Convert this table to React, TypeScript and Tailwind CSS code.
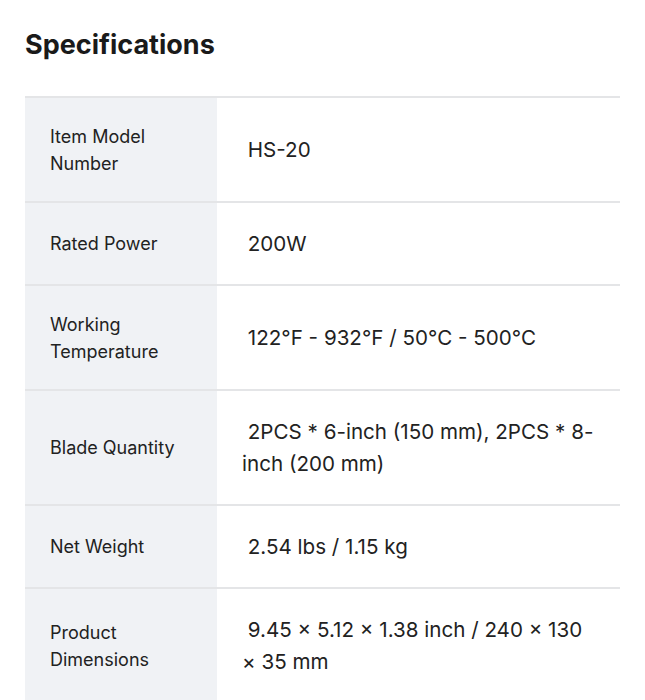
import React from 'react';

interface SpecRow {
    label: string[];
    value: string;
}

const specs: SpecRow[] = [
    { label: ['Item Model', 'Number'], value: '\u00a0HS-20' },
    { label: ['Rated Power'], value: '\u00a0200W' },
    { label: ['Working', 'Temperature'], value: '\u00a0122°F - 932°F / 50°C - 500°C' },
    { label: ['Blade Quantity'], value: '\u00a02PCS * 6-inch (150 mm), 2PCS * 8-inch (200 mm)' },
    { label: ['Net Weight'], value: '\u00a02.54 lbs / 1.15 kg' },
    { label: ['Product', 'Dimensions'], value: '\u00a09.45 × 5.12 × 1.38 inch / 240 × 130 × 35 mm' },
];

const App: React.FC = () => {
    return (
        <div className="min-h-screen bg-white font-['Inter',sans-serif] text-[#1c1c1e] px-[25px] pt-[28px]">
            <h2 className="text-[27px] font-bold leading-[34px] text-[#1a1a1a] mb-[34px]">Specifications</h2>

            {/* Spec table */}
            <div className="w-[595px] border-t-2 border-[#e4e5e7]">
                {specs.map((row) => (
                    <div key={row.value} className="flex border-b-2 border-[#e4e5e7]">
                        <div className="w-[192px] shrink-0 bg-[#f0f2f5] px-[25px] py-[24.5px] flex items-center">
                            <span className="text-[18px] leading-[27px] text-[#222]">
                                {row.label.map((line) => (
                                    <span key={line} className="block">{line}</span>
                                ))}
                            </span>
                        </div>
                        <div className="flex-1 pl-[25px] pr-[20px] py-[24.5px] flex items-center">
                            <span className="text-[20.6px] leading-[32px] text-[#222]">{row.value}</span>
                        </div>
                    </div>
                ))}
            </div>
        </div>
    );
};

export default App;
